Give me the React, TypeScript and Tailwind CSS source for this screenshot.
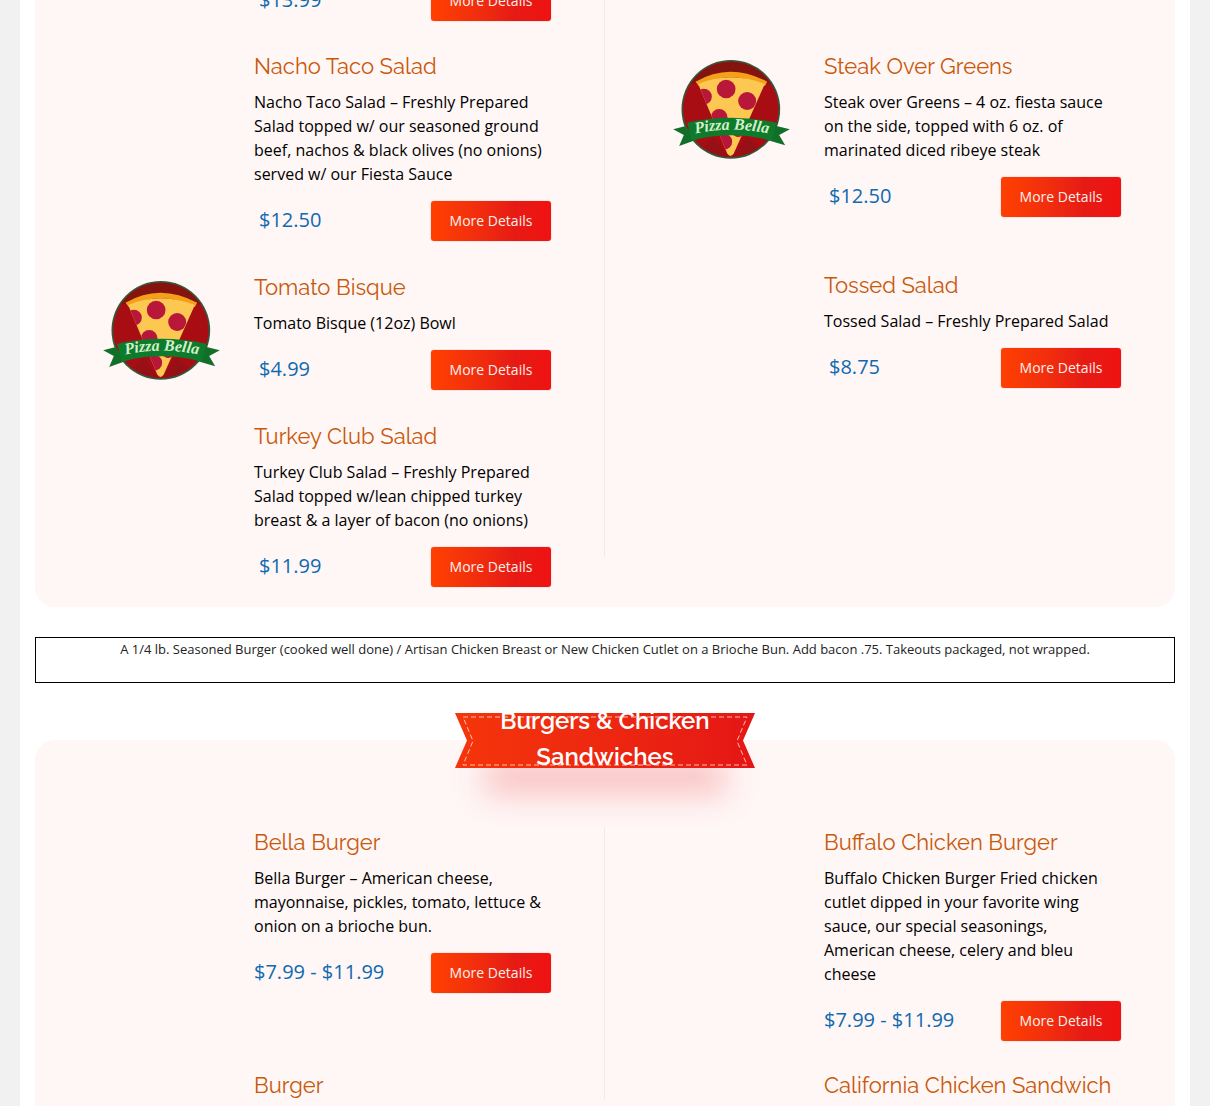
import React from "react";

function Logo() {
  return (
    <svg viewBox="130 60 350 300" className="w-[117px] h-[100px] block">
      <defs>
        <clipPath id="disc">
          <circle cx="303" cy="208" r="143" />
        </clipPath>
        <clipPath id="slice">
          <path d="M205 132 Q300 92 405 132 L312 340 Q302 356 292 340 Z" />
        </clipPath>
      </defs>
      <circle cx="303" cy="208" r="148" fill="#35573a" />
      <circle cx="303" cy="208" r="143" fill="#a80d14" />
      <g clipPath="url(#disc)">
        <path d="M150 60 H460 V130 L400 130 Q300 85 205 130 L150 130 Z" fill="#85140f" />
        <path d="M250 290 L296 350 L250 360 L225 320 Z" fill="#961015" />
        <path d="M350 290 L308 350 L360 360 L385 320 Z" fill="#961015" />
      </g>
      <path d="M197 125 Q300 65 412 125 L405 138 Q300 86 207 138 Z" fill="#f4a019" />
      <path d="M205 132 Q300 92 405 132 L312 340 Q302 356 292 340 Z" fill="#fdc851" />
      <g clipPath="url(#slice)" fill="#b8173a">
        <circle cx="289" cy="147" r="28" />
        <circle cx="352" cy="183" r="27" />
        <circle cx="222" cy="170" r="24" />
        <circle cx="268" cy="232" r="25" />
        <circle cx="283" cy="305" r="24" />
        <circle cx="325" cy="275" r="16" />
      </g>
      <path d="M130 268 L168 258 L198 300 L148 318 L162 285 Z" fill="#126f2a" />
      <path d="M480 268 L440 258 L412 300 L466 316 L448 285 Z" fill="#126f2a" />
      <path d="M172 248 Q303 218 440 248 L426 302 Q303 270 186 302 Z" fill="#0e7a2c" />
      <path id="ribbon-text" d="M192 282 Q303 256 420 282" fill="none" />
      <text fontFamily="'Liberation Serif', serif" fontStyle="italic" fontWeight="700" fontSize="48" fill="#d4f0ca">
        <textPath href="#ribbon-text" startOffset="50%" textAnchor="middle">
          Pizza Bella
        </textPath>
      </text>
    </svg>
  );
}

function PriceRow({ price, range }: { price: string; range?: boolean }) {
  return (
    <div className="flex items-center justify-between h-10">
      <span className={`mb-[2px] text-[20px] text-[#0f6ab0] ${range ? "" : "pl-[5px]"}`}>{price}</span>
      <a className="w-[120px] h-10 flex items-center justify-center rounded-[3px] text-sm text-[#fff0ea] bg-gradient-to-r from-[#ff4000] via-[#e61a14] via-70% to-[#f01212] shadow-[0_0_1px_rgba(120,0,0,0.6)]">
        More Details
      </a>
    </div>
  );
}

type ItemProps = {
  title: string;
  text?: string;
  price?: string;
  range?: boolean;
  logo?: boolean;
  className?: string;
};

function MenuItem({ title, text, price, range, logo, className }: ItemProps) {
  return (
    <div className={`flex ${className ?? ""}`}>
      <div className="w-[219px] shrink-0 pl-[68px] pt-[9px]">{logo && <Logo />}</div>
      <div className="w-[297px]">
        <h3 className="text-[22px] leading-[30px] font-['Raleway','Lato',sans-serif] text-[#c8590a]">{title}</h3>
        {text && <p className="mt-[9px] mb-[15px] text-base leading-6 text-black">{text}</p>}
        {price && <PriceRow price={price} range={range} />}
      </div>
    </div>
  );
}

export default function App() {
  return (
    <div className="h-[1106px] overflow-hidden bg-[#f1f1f1] font-['Open_Sans',sans-serif]">
      <div className="mx-[20px] bg-white px-[15px] h-[1200px]">
        {/* Salads */}
        <section className="-mt-[19px] flex bg-[#fff6f6] rounded-[20px] pb-[50px]">
          <div className="w-[570px] border-r border-[#f5e8e8]">
            <div className="flex mb-[30px]">
              <div className="w-[219px] shrink-0" />
              <div className="w-[297px]">
                <PriceRow price="$13.99" />
              </div>
            </div>
            <MenuItem
              className="mb-[31px]"
              title="Nacho Taco Salad"
              text="Nacho Taco Salad – Freshly Prepared Salad topped w/ our seasoned ground beef, nachos & black olives (no onions) served w/ our Fiesta Sauce"
              price="$12.50"
            />
            <MenuItem
              className="mb-[31px]"
              logo
              title="Tomato Bisque"
              text="Tomato Bisque (12oz) Bowl"
              price="$4.99"
            />
            <MenuItem
              className="-mb-[30px]"
              title="Turkey Club Salad"
              text="Turkey Club Salad – Freshly Prepared Salad topped w/lean chipped turkey breast & a layer of bacon (no onions)"
              price="$11.99"
            />
          </div>
          <div className="flex-1 pt-[70px]">
            <MenuItem
              className="mb-[53px]"
              logo
              title="Steak Over Greens"
              text="Steak over Greens – 4 oz. fiesta sauce on the side, topped with 6 oz. of marinated diced ribeye steak"
              price="$12.50"
            />
            <MenuItem title="Tossed Salad" text="Tossed Salad – Freshly Prepared Salad" price="$8.75" />
          </div>
        </section>

        <div className="mt-[30px] h-[46px] border border-black text-center text-[13px] leading-[22px] text-[#222]">
          A 1/4 lb. Seasoned Burger (cooked well done) / Artisan Chicken Breast or New Chicken Cutlet on a Brioche Bun. Add bacon .75. Takeouts packaged, not wrapped.
        </div>

        {/* Burgers */}
        <section className="relative mt-[57px] flex bg-[#fff6f6] rounded-[20px] pt-[87px] pb-[100px]">
          <div className="absolute left-[420px] -top-[27px] w-[300px] h-[55px]">
            <div className="absolute left-[30px] right-[30px] top-[48px] h-[32px] bg-[#e81212]/25 blur-[16px]" />
            <div className="absolute inset-0 bg-gradient-to-r from-[#f5350a] to-[#e51515] [clip-path:polygon(0_0,100%_0,96%_50%,100%_100%,0_100%,4%_50%)]" />
            <svg viewBox="0 0 300 55" className="absolute inset-0 w-full h-full" fill="none">
              <path
                d="M8 4 H292 L282 28 L292 52 H8 L18 28 Z"
                stroke="#ffe9d6"
                strokeWidth="0.8"
                strokeDasharray="5 3"
              />
            </svg>
            <div className="absolute left-0 right-0 -top-[10px] text-center px-[30px] text-2xl leading-9 font-semibold text-white font-['Raleway','Lato',sans-serif]">
              Burgers & Chicken Sandwiches
            </div>
          </div>
          <div className="w-[570px] border-r border-[#f5e8e8]">
            <MenuItem
              className="mb-[77px]"
              title="Bella Burger"
              text="Bella Burger – American cheese, mayonnaise, pickles, tomato, lettuce & onion on a brioche bun."
              price="$7.99 - $11.99"
              range
            />
            <MenuItem title="Burger" />
          </div>
          <div className="flex-1">
            <MenuItem
              className="mb-[29px]"
              title="Buffalo Chicken Burger"
              text="Buffalo Chicken Burger Fried chicken cutlet dipped in your favorite wing sauce, our special seasonings, American cheese, celery and bleu cheese"
              price="$7.99 - $11.99"
              range
            />
            <MenuItem title="California Chicken Sandwich" />
          </div>
        </section>
      </div>
    </div>
  );
}
